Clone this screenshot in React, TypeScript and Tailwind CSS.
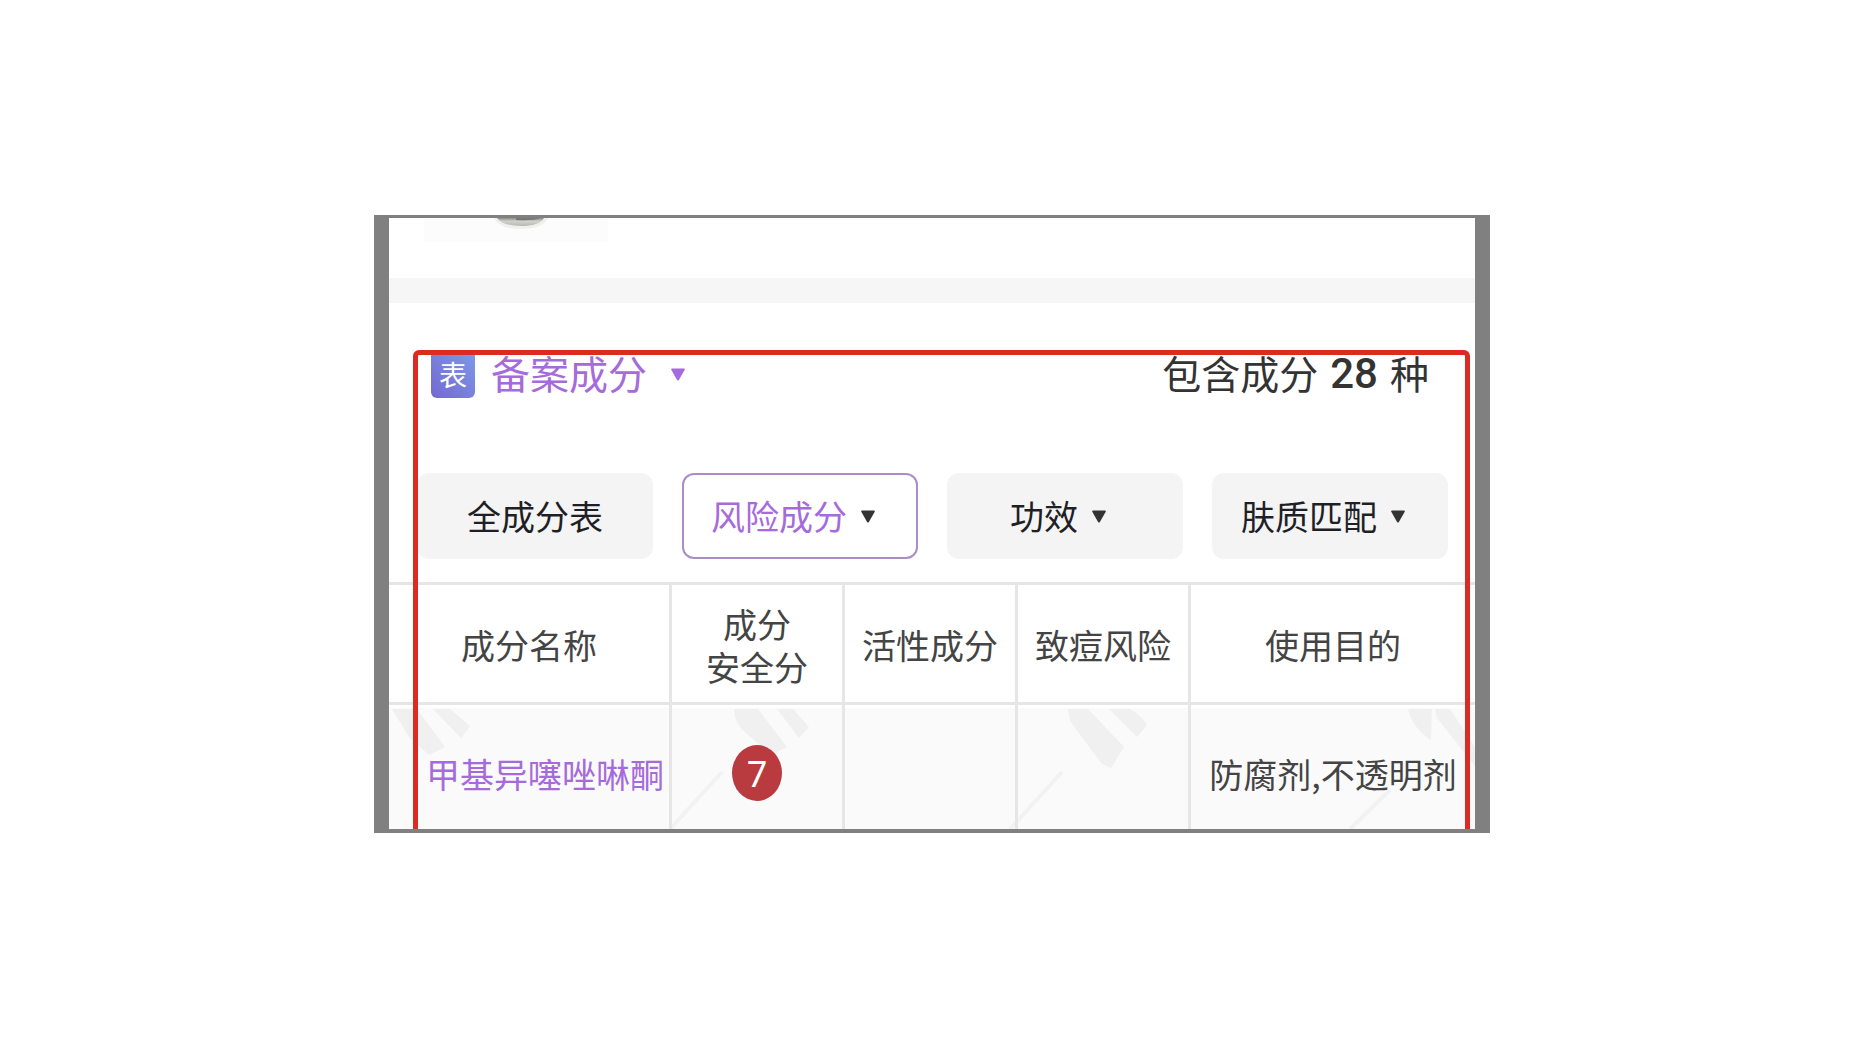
import clsx from "clsx";

const tabs = [
  { label: "全成分表", menu: false, active: false },
  { label: "风险成分", menu: true, active: true },
  { label: "功效", menu: true, active: false },
  { label: "肤质匹配", menu: true, active: false },
];

const rows = [{ name: "甲基异噻唑啉酮", score: 7, active: "", acne: "", purpose: "防腐剂,不透明剂" }];

function Caret({ className }: { className?: string }) {
  return (
    <svg viewBox="0 0 14 13" aria-hidden="true" className={clsx("h-[13px] w-3.5 shrink-0", className)}>
      <path d="M1 .5h12q1.200.2.7 1.200L7.900 12q-.9 1.200-1.800 0L.3 1.700Q-.2.7 1 .5Z" fill="currentColor" />
    </svg>
  );
}

function ProductRemnant() {
  return (
    <svg viewBox="0 0 184 27" aria-hidden="true" className="ml-[35px] h-[27px] w-[184px]">
      <defs>
        <linearGradient id="base" x1="0" x2="0" y1="0" y2="1">
          <stop offset="0" stopColor="#8c8c88" />
          <stop offset=".4" stopColor="#d2d2cc" />
          <stop offset="1" stopColor="#b8b8b2" />
        </linearGradient>
      </defs>
      <path d="M0 0h184v24H0Z" fill="#fcfcfc" />
      <path d="M70 0h54q-5 11-27 11T70 0Z" fill="#f0f0ee" />
      <path d="M73 0h47q-5 8-23 8T73 0Z" fill="url(#base)" />
      <path d="M92 0h24q-6 3-24 2Z" fill="#777773" />
    </svg>
  );
}

function Watermark() {
  return (
    <div className="absolute inset-x-0 bottom-0 h-[121px] bg-[#fafafa]">
      <svg viewBox="0 0 1086 121" preserveAspectRatio="none" aria-hidden="true" className="h-full w-full">
        <g fill="#f0f0f0">
          <path d="M3 1h25l28 38-16 8-20-18Z" />
          <path d="M44 1h17l20 17-9 12Z" />
          <path d="M345 1h24l29 38-16 8-24-21q-13-10-13-25Z" />
          <path d="M388 1h16l16 18-10 11Z" />
          <path d="M679 1h20l36 38-13 21-9-4-32-43Z" />
          <path d="M720 1h21q12 7 17 16l-10 12Z" />
          <path d="M1019 1h24l-1 31q-18-11-23-31Z" />
          <path d="M1046 1h15l25 38v19l-38-48Z" />
        </g>
        <path d="m281 121 52-57M621 121l52-57M961 121l40-39" stroke="#f2f2f2" strokeWidth="4" fill="none" />
      </svg>
    </div>
  );
}

export default function App() {
  const head = "border-r-3 border-b-3 border-[#e6e6e6] px-0 pt-0.5 pb-0 text-center font-normal last:border-r-0";
  const cell = "border-r-3 border-[#e6e6e6] px-0 pt-3 pb-0 text-center whitespace-nowrap last:border-r-0";

  return (
    <main className="min-h-screen bg-white px-4 pt-[215px] font-['Noto_Sans_CJK_SC',sans-serif]">
      <section className="relative mx-auto max-w-[1116px] overflow-hidden border-x-15 border-t-3 border-b-4 border-[#808080] bg-white">
        <div className="h-[60px]">
          <ProductRemnant />
        </div>
        <div className="h-[25px] bg-[#f6f6f6]" />

        <header className="mt-[47px] flex h-12 items-center justify-between pr-[46px] pl-[42px]">
          <button className="flex items-center text-[39px] leading-12 text-[#a56bdc]">
            <span className="mr-4 grid h-12 w-11 place-items-center rounded-md bg-linear-to-tr from-[#7468d0] to-[#7c9be8] text-[28px] text-white">
              表
            </span>
            <span className="pb-1">备案成分</span>
            <Caret className="ml-6" />
          </button>
          <p className="flex items-center gap-3 text-[39px] leading-12 text-[#333]">
            <span className="pb-1">包含成分</span>
            <span className="font-[Roboto,sans-serif] text-[42px] font-medium">28</span>
            <span className="pb-1">种</span>
          </p>
        </header>

        <nav className="mt-[75px] grid grid-cols-4 gap-[29px] pr-[27px] pl-7">
          {tabs.map((tab) => (
            <button
              key={tab.label}
              className={clsx(
                "flex h-[86px] items-center justify-center gap-3.5 rounded-xl text-[34px] leading-none",
                tab.active ? "border-2 border-[#aa8dc8] bg-white text-[#a56bdc]" : "bg-[#f4f4f4] text-[#1f1f26]",
                tab.menu && "pr-3.5",
              )}
            >
              {tab.label}
              {tab.menu && <Caret className="text-[#333]" />}
            </button>
          ))}
        </nav>

        <div className="relative mt-[23px] border-t-3 border-[#e6e6e6]">
          <Watermark />
          <table className="relative w-full table-fixed border-separate border-spacing-0 text-[34px] leading-[43px] text-[#444]">
            <thead>
              <tr className="h-[120px]">
                <th className={clsx(head, "w-[283px]")}>成分名称</th>
                <th className={clsx(head, "w-[173px]")}>
                  成分
                  <br />
                  安全分
                </th>
                <th className={clsx(head, "w-[173px]")}>活性成分</th>
                <th className={clsx(head, "w-[173px]")}>致痘风险</th>
                <th className={head}>使用目的</th>
              </tr>
            </thead>
            <tbody>
              {rows.map((row) => (
                <tr key={row.name} className="h-[124px]">
                  <td className={clsx(cell, "pl-8")}>
                    <a href="#ingredient" className="text-[#a56bdc]">
                      {row.name}
                    </a>
                  </td>
                  <td className={cell}>
                    <span className="mx-auto grid h-14 w-[50px] place-items-center rounded-[50%] bg-[#b93b3f] font-['Noto_Sans',sans-serif] text-[36px] text-white">
                      {row.score}
                    </span>
                  </td>
                  <td className={cell}>{row.active}</td>
                  <td className={cell}>{row.acne}</td>
                  <td className={cell}>{row.purpose}</td>
                </tr>
              ))}
            </tbody>
          </table>
        </div>

        {/* highlight box, open at the bottom edge of the frame */}
        <div className="pointer-events-none absolute top-[132px] right-[5px] -bottom-3 left-6 rounded-md border-5 border-[#dc2b23]" />
      </section>
    </main>
  );
}
